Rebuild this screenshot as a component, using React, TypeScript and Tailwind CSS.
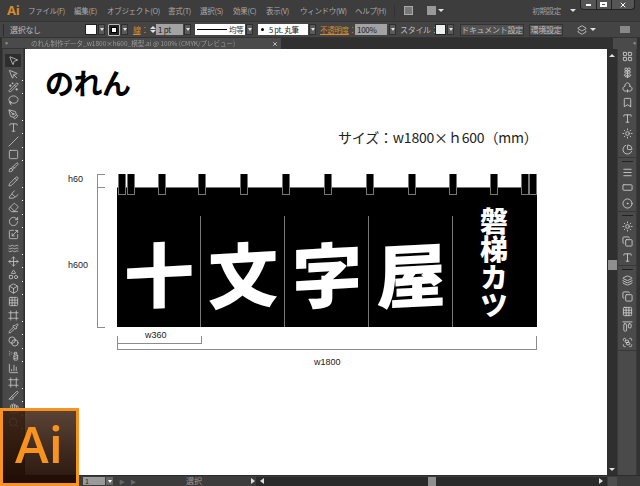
import React from 'react';
import {
  MousePointer2, MousePointer, Wand2, Lasso, PenTool, Type, Slash, Square, Brush, Pencil, Highlighter, Eraser,
  RotateCw, Scaling, Waves, Move, Shapes, Box, Grid3x3, Pipette, Layers2, SprayCan, BarChart3, Frame, Blend,
  Slice, Hand, Search, LayoutGrid, Flower2, Club, Bookmark, PieChart, Menu, RectangleHorizontal, CircleDot,
  Sun, Copy, Layers, AlignStartHorizontal, Group, X,
} from 'lucide-react';

const font = "font-['Noto_Sans_CJK_JP','Noto_Sans',sans-serif]";

const menus = [
  { label: 'ファイル(F)', w: 'w-[37px]', mr: 'mr-[9px]' },
  { label: '編集(E)', w: 'w-[23px]', mr: 'mr-[10px]' },
  { label: 'オブジェクト(O)', w: 'w-[51px]', mr: 'mr-[10px]' },
  { label: '書式(T)', w: 'w-[23px]', mr: 'mr-[9px]' },
  { label: '選択(S)', w: 'w-[24px]', mr: 'mr-[9px]' },
  { label: '効果(C)', w: 'w-[24px]', mr: 'mr-[9px]' },
  { label: '表示(V)', w: 'w-[24px]', mr: 'mr-[10px]' },
  { label: 'ウィンドウ(W)', w: 'w-[46px]', mr: 'mr-[9px]' },
  { label: 'ヘルプ(H)', w: 'w-[32px]', mr: 'mr-0' },
];

const tools = [
  MousePointer2, MousePointer, Wand2, Lasso, PenTool, Type, Slash, Square, Brush, Pencil, Highlighter, Eraser,
  RotateCw, Scaling, Waves, Move, Shapes, Box, Grid3x3, Frame, Pipette, Blend, SprayCan, BarChart3, Frame, Slice, Hand, Search,
];

const dockGroups = [
  [LayoutGrid, Flower2, Club, Bookmark, Type, Sun, PieChart],
  [Menu, RectangleHorizontal, CircleDot],
  [Sun, Copy, Type],
  [Layers, Copy, Grid3x3, AlignStartHorizontal, Group],
];

const tabXs = [0, 9, 40, 80, 122, 164, 206, 248, 290, 331, 372, 403, 411];

const Arrow = ({ down = true }: { down?: boolean }) => (
  <span className={`block w-0 h-0 border-x-[3px] border-x-transparent ${down ? 'border-t-[3px] border-t-[#e0e0e0]' : 'border-b-[3px] border-b-[#e0e0e0]'}`} />
);

const DropBtn = ({ className = '' }: { className?: string }) => (
  <span className={`w-[7px] h-[11px] bg-[#5a5a5a] border border-[#2f2f2f] flex items-center justify-center ${className}`}>
    <span className="w-0 h-0 border-x-[2px] border-x-transparent border-t-[3px] border-t-[#e0e0e0]" />
  </span>
);

const MenuBar = () => (
  <div className="h-[21px] flex items-center text-[7.5px] tracking-[-0.3px] text-[#aaaaaa] bg-[#3d3d3d] relative">
    <span className="ml-[7px] w-[21px] text-[13px] font-bold text-[#d98a2b] font-['Open_Sans',sans-serif]">Ai</span>
    {menus.map(m => (
      <span key={m.label} className={`${m.w} ${m.mr} whitespace-nowrap`}>{m.label}</span>
    ))}
    <span className="ml-[7px] w-px h-[14px] bg-[#333]" />
    <span className="ml-[9px] w-[9px] h-[9px] bg-[#777] border border-[#aaa]" />
    <span className="ml-[14px] w-[9px] h-[9px] bg-[#999]" />
    <span className="ml-[2px]"><Arrow /></span>
    <span className="ml-auto mr-[9px] text-[#a0a0a0]">初期設定</span>
    <span className="mr-[4px]"><Arrow /></span>
    <div className="flex self-start h-[10px] mr-[5px] w-[55px] border border-t-0 border-[#222] rounded-b-sm bg-[#555]">
      <span className="flex-1 flex items-center justify-center"><span className="w-[5px] h-[2px] bg-white" /></span>
      <span className="flex-1 flex items-center justify-center border-x border-[#222]"><span className="w-[7px] h-[5px] border-2 border-white" /></span>
      <span className="flex-[1.5] flex items-center justify-center"><X size={8} strokeWidth={3} className="text-white" /></span>
    </div>
  </div>
);

const OptionsBar = () => (
  <div className="h-[17px] flex items-center text-[8px] tracking-[-0.3px] text-[#bbbbbb] bg-[#444] border-y border-[#333]">
    <span className="ml-[3px] w-px h-[12px] bg-[#2c2c2c]" />
    <span className="ml-[6px] w-[75px]">選択なし</span>
    <span className="w-[12px] h-[11px] bg-white border border-[#222]" />
    <DropBtn className="ml-[1px]" />
    <span className="ml-[3px] w-[12px] h-[12px] border border-[#bbb] bg-[#222] flex items-center justify-center rounded-[1px]">
      <span className="w-[6px] h-[6px] bg-white border border-black" />
    </span>
    <DropBtn className="ml-[1px]" />
    <span className="ml-[5px] w-[17px] text-[#d98a2b] whitespace-nowrap"><u>線</u>：</span>
    <span className="w-[6px] flex flex-col gap-px items-center"><Arrow down={false} /><Arrow /></span>
    <span className="w-[27px] h-[11px] bg-[#a3a3a3] text-[#222] leading-[11px] pl-[2px]">1 pt</span>
    <DropBtn className="ml-[1px]" />
    <span className="ml-[4px] w-[50px] h-[11px] bg-white text-[#333] flex items-center text-[7.5px]">
      <span className="ml-[2px] w-[30px] h-px bg-black" />
      <span className="ml-[2px]">均等</span>
    </span>
    <DropBtn className="ml-[1px]" />
    <span className="ml-[5px] w-[50px] h-[11px] bg-white text-[#222] flex items-center text-[7.5px] whitespace-nowrap">
      <span className="ml-[3px] w-[3px] h-[3px] rounded-full bg-black" />
      <span className="ml-[5px]">5 pt. 丸筆</span>
    </span>
    <DropBtn className="ml-[1px]" />
    <span className="ml-[4px] w-[35px] text-[#d98a2b] text-[7.5px] whitespace-nowrap"><u>不透明度</u>：</span>
    <span className="w-[32px] h-[11px] bg-[#a3a3a3] text-[#222] leading-[11px] pl-[2px]">100%</span>
    <DropBtn className="ml-[2px]" />
    <span className="ml-[4px] w-[35px] whitespace-nowrap">スタイル：</span>
    <span className="w-[11px] h-[11px] bg-[#eee] border border-[#222]" />
    <DropBtn className="ml-[1px]" />
    <span className="ml-[6px] w-[64px] h-[12px] bg-[#515151] border border-[#333] text-center leading-[10px] whitespace-nowrap">ドキュメント設定</span>
    <span className="ml-[5px] w-[34px] h-[12px] bg-[#515151] border border-[#333] text-center leading-[10px] whitespace-nowrap">環境設定</span>
    <Layers2 size={10} className="ml-[14px] text-[#ccc]" />
    <span className="ml-[3px]"><Arrow /></span>
    <span className="ml-auto mr-[10px] w-[10px] h-[7px] bg-[#888]" />
  </div>
);

const TabRow = () => (
  <div className="h-[11px] flex bg-[#303030]">
    <div className="w-[25px] bg-[#4a4a4a] ml-[2px] mr-[-2px] border-b border-[#333] flex items-center pl-[3px] text-[6px] text-[#ccc] leading-none">»</div>
    <div className="w-[254px] ml-[2px] bg-[#4b4b4b] flex items-center text-[6.5px] leading-none text-[#9a9a9a] whitespace-nowrap pl-[4px] blur-[0.4px]">
      <span className="w-[238px]">のれん制作データ_w1800×h600_横型.ai @ 100% (CMYK/プレビュー)</span>
      <X size={6} strokeWidth={3} className="ml-[3px] text-[#ddd]" />
    </div>
    <div className="ml-auto w-[24px] mr-[3px] bg-[#4a4a4a] text-right pr-[1px] text-[6px] text-[#ccc] leading-none pt-[2px]">«</div>
  </div>
);

const Toolbar = () => (
  <div className="w-[25px] bg-[#2e2e2e] pl-[2px] pr-px shrink-0">
    <div className="h-full bg-[#494949] pt-[5px] flex flex-col items-center border-x border-[#3a3a3a] blur-[0.3px]">
      {tools.map((Icon, i) => (
        <div key={i} className={`relative w-[16px] h-[13.4px] shrink-0 flex items-center justify-center ${i === 0 ? 'bg-[#2e2e2e]' : ''}`}>
          <Icon size={11} strokeWidth={1.8} className="text-[#c6c6c6]" />
          {i > 0 && i % 5 !== 3 && <span className="absolute right-[-2px] bottom-0 w-px h-px bg-white" />}
        </div>
      ))}
    </div>
  </div>
);

const BracketLine = ({ className }: { className: string }) => <div className={`absolute bg-[#8c8c8c] ${className}`} />;

const Canvas = () => (
  <div className="flex-1 bg-white relative overflow-hidden text-black">
    <h1 className="absolute left-[20px] top-[13px] text-[29px] leading-[40px] font-bold tracking-[-0.5px]">のれん</h1>
    <p className="absolute left-[313px] top-[77px] text-[14px] tracking-[-0.2px] leading-[22px] whitespace-nowrap text-[#222]">サイズ：w1800×ｈ600（mm）</p>

    <span className="absolute left-[43px] top-[124px] text-[9px] leading-[12px] text-[#222] font-['Liberation_Sans',sans-serif]">h60</span>
    <span className="absolute left-[43px] top-[210px] text-[9px] leading-[12px] text-[#222] font-['Liberation_Sans',sans-serif]">h600</span>
    <span className="absolute left-[120px] top-[280px] text-[9px] leading-[12px] text-[#222] font-['Liberation_Sans',sans-serif]">w360</span>
    <span className="absolute left-[289px] top-[307px] text-[9px] leading-[12px] text-[#222] font-['Liberation_Sans',sans-serif]">w1800</span>

    <BracketLine className="left-[72px] top-[125px] w-px h-[153px]" />
    <BracketLine className="left-[72px] top-[125px] w-[8px] h-px" />
    <BracketLine className="left-[72px] top-[138px] w-[8px] h-px" />
    <BracketLine className="left-[72px] top-[278px] w-[8px] h-px" />

    <BracketLine className="left-[92px] top-[287px] w-px h-[14px]" />
    <BracketLine className="left-[92px] top-[294px] w-[85px] h-px" />
    <BracketLine className="left-[176px] top-[287px] w-px h-[8px]" />
    <BracketLine className="left-[92px] top-[300px] w-[420px] h-px" />
    <BracketLine className="left-[511px] top-[287px] w-px h-[14px]" />

    {/* noren */}
    <div className="absolute left-[92px] top-[138px] w-[420px] h-[140px] bg-black border-t border-[#777] flex text-white font-black">
      {['十', '文', '字', '屋'].map(c => (
        <div key={c} className="w-[84px] relative">
          <span className="absolute right-0 top-[28px] bottom-0 w-px bg-[#777]" />
          <span className="absolute inset-x-0 top-[36px] text-center text-[70px] leading-[96px] -skew-y-3">{c}</span>
        </div>
      ))}
      <div className="flex-1 pt-[19px] pl-[27px]">
        <span className="block [writing-mode:vertical-rl] text-[28px] leading-[28px] font-black">磐梯カツ</span>
      </div>
    </div>
    {tabXs.map(x => (
      <div
        key={x}
        className="absolute top-[125px] w-[8px] h-[21px] bg-black border-x border-b border-[#777]"
        style={{ left: 93 + x }}
      />
    ))}
  </div>
);

const VScroll = () => (
  <div className="w-[10px] bg-[#2f2f2f] flex flex-col items-center pt-[5px] pb-[4px] shrink-0">
    <Arrow down={false} />
    <div className="mt-[203px] w-[9px] h-[10px] bg-[#8f8f8f]" />
    <div className="mt-auto"><Arrow /></div>
  </div>
);

const Dock = () => (
  <div className="w-[23px] bg-[#333] pr-[3px] shrink-0">
    <div className="h-full bg-[#4a4a4a] border-x border-[#3a3a3a] flex flex-col blur-[0.3px]">
      {dockGroups.map((g, i) => (
        <div key={i} className="flex flex-col items-center border-b border-[#383838]">
          {i > 0 && <span className="w-[11px] h-px bg-[#222] my-[3px]" />}
          {g.map((Icon, j) => (
            <div key={j} className="h-[15.4px] flex items-center justify-center">
              <Icon size={11} strokeWidth={2} className="text-[#c8c8c8]" />
            </div>
          ))}
        </div>
      ))}
    </div>
  </div>
);

const StatusBar = () => (
  <div className="h-[11px] flex items-center bg-[#3c3c3c] text-[8px] text-[#a8a8a8] border-t border-[#2c2c2c]">
    <span className="ml-[83px] w-[22px] h-[8px] bg-[#9a9a9a] text-[#222] text-[7px] leading-[8px] pl-[2px]">1</span>
    <span className="ml-[1px] w-[7px] h-[8px] bg-[#666] flex items-center justify-center"><span className="w-0 h-0 border-x-[2px] border-x-transparent border-t-[3px] border-t-white" /></span>
    <span className="ml-[6px] text-[#666] text-[6px] tracking-[2px]">▶ ▶</span>
    <span className="ml-auto" />
    <div className="absolute left-[186px] text-[#999]">選択</div>
    <span className="absolute left-[251px] w-0 h-0 border-y-[3px] border-y-transparent border-l-[4px] border-l-[#ddd]" />
    <div className="w-[351px] h-[9px] bg-[#2a2a2a] flex items-center px-[4px] relative">
      <span className="w-0 h-0 border-y-[3px] border-y-transparent border-r-[4px] border-r-[#ddd]" />
      <span className="absolute left-[172px] w-[8px] h-[9px] bg-[#8f8f8f]" />
      <span className="ml-auto w-0 h-0 border-y-[3px] border-y-transparent border-l-[4px] border-l-[#ddd]" />
    </div>
    <span className="w-[9px] h-[9px] ml-px mr-[23px] bg-[#4d4d4d]" />
  </div>
);

const AiBadge = () => (
  <div className="absolute left-0 top-[408px] w-[79px] h-[78px] border-[3px] border-[#f7931e] bg-linear-to-b from-[#3d2212]/85 to-[#1f0a02]/95 overflow-hidden">
    <span className="absolute left-[12px] top-[-3px] text-[51px] leading-[70px] text-[#f7931e] font-semibold font-['Open_Sans',sans-serif]">Ai</span>
  </div>
);

export default function App() {
  return (
    <div className={`relative w-[640px] h-[486px] bg-[#3b3b3b] overflow-hidden flex flex-col ${font}`}>
      <MenuBar />
      <OptionsBar />
      <TabRow />
      <div className="flex-1 flex min-h-0">
        <Toolbar />
        <Canvas />
        <VScroll />
        <Dock />
      </div>
      <StatusBar />
      <AiBadge />
    </div>
  );
}
